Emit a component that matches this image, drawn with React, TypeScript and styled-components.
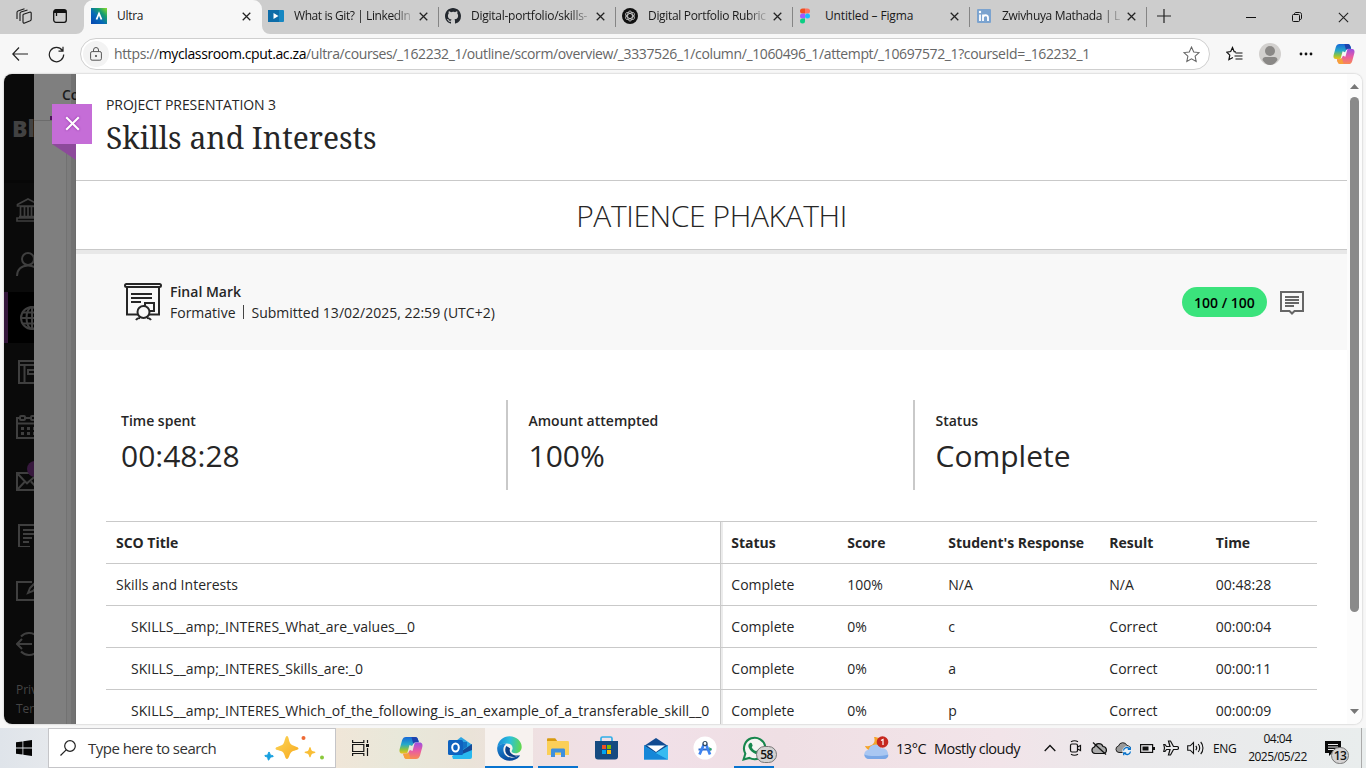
import React from 'react';
import styled, { createGlobalStyle } from 'styled-components';

const UI = '"Open Sans", "Noto Sans", sans-serif';

const Global = createGlobalStyle`
  * { box-sizing: border-box; }
  html, body { margin: 0; padding: 0; }
  body { width: 1366px; height: 768px; overflow: hidden; font-family: ${UI}; color: #262626; }
  svg { display: block; flex: none; }
`;

const Screen = styled.div`
  width: 1366px; height: 768px; overflow: hidden;
  display: flex; flex-direction: column; background: #f7f7f7;
`;

/* Browser chrome */
const TabBar = styled.div`
  height: 34px; flex: none; display: flex; background: #cdcdcd;
`;
const TabTools = styled.div`
  width: 84px; display: flex; align-items: center; padding: 0 17px 2px 16px; justify-content: space-between;
`;
const Tab = styled.div<{ $active?: boolean }>`
  width: ${p => (p.$active ? 178 : 177)}px; height: 34px; display: flex; align-items: center;
  padding: 0 11px 2px ${p => (p.$active ? 7 : 6)}px; position: relative;
  background: ${p => (p.$active ? '#f7f7f7' : 'transparent')};
  border-radius: 9px 9px 0 0;
`;
const TabFoot = styled.svg<{ $side: 'left' | 'right' }>`
  position: absolute; bottom: 0; ${p => p.$side}: -8px; width: 8px; height: 8px;
`;
const Favicon = styled.span`
  width: 16px; height: 16px; flex: none; display: flex; align-items: center; justify-content: center;
`;
const TabTitle = styled.span<{ $fade?: boolean; $ls?: number }>`
  margin-left: 10px; flex: 1; white-space: nowrap; font-size: 12px; line-height: 18px; color: #1a1a1a;
  letter-spacing: ${p => p.$ls ?? -0.15}px;
  ${p => p.$fade && 'mask-image: linear-gradient(90deg, #000 84%, rgba(0,0,0,.15) 100%);'}
`;
const TabClose = styled.span`
  width: 9px; margin-left: 7px; padding-top: 1px;
`;
const Divider = styled.span`
  position: absolute; right: 0; top: 7px; width: 1px; height: 20px; background: #858585;
`;
const WindowButtons = styled.div`
  margin-left: auto; display: flex; width: 138px;
`;
const WindowButton = styled.span`
  width: 46px; display: flex; align-items: center; justify-content: center;
`;
const NewTab = styled.span`
  width: 34px; display: flex; align-items: center; justify-content: center; padding-bottom: 3px;
`;
const Toolbar = styled.div`
  height: 40px; flex: none; display: flex; align-items: center; background: #f7f7f7;
`;
const ToolCell = styled.span<{ $w: number }>`
  width: ${p => p.$w}px; display: flex; justify-content: center; flex: none;
`;
const Address = styled.div`
  width: 1130px; height: 32px; border: 1px solid #cfcfcf; border-radius: 16px; background: #fff;
  display: flex; align-items: center; padding: 0 9px 0 2px; 
`;
const LockChip = styled.span`
  width: 26px; height: 26px; border-radius: 50%; background: #f3f3f3; display: flex; align-items: center; justify-content: center;
`;
const Url = styled.span`
  flex: 1; margin-left: 5px; font-size: 14px; line-height: 20px; letter-spacing: -0.375px; color: #666; white-space: nowrap;
  b { font-weight: 400; color: #000; }
`;

/* Page area */
const Page = styled.div`
  height: 650px; flex: none; margin: 0 4px; display: flex; overflow: hidden; background: #fff;
  border-radius: 8px; box-shadow: 0 0 2px rgba(0,0,0,.3);
`;
const SideNav = styled.nav`
  width: 30px; flex: none; overflow: hidden; background: #0a0a0a; display: flex; flex-direction: column;
`;
const Brand = styled.div`
  height: 109px; flex: none; padding: 40px 0 0 8px; font-size: 23px; font-weight: 800; line-height: 28px; color: #424242;
  border-bottom: 3px solid #070707; white-space: nowrap; 
`;
const NavItem = styled.div<{ $active?: boolean; $pad: number }>`
  height: 51px; flex: none; margin-bottom: 3.25px; display: flex; align-items: center; position: relative;
  padding: 2px 0 0 ${p => p.$pad}px; background: ${p => (p.$active ? '#000' : 'transparent')};
  box-shadow: ${p => (p.$active ? 'inset 4px 0 #34173b' : 'none')};
  svg { fill: none; stroke: #3f3f3f; stroke-width: 2; }
`;
const NavBadge = styled.span`
  position: absolute; left: 23px; top: 7px; width: 16px; height: 16px; border-radius: 50%; background: #37183e;
`;
const NavLinks = styled.div`
  padding: 9px 0 0 12px; font-size: 12px; line-height: 19px; color: #454545; white-space: nowrap;
`;
const Backdrop = styled.div`
  width: 42px; flex: none; position: relative; background: #7f7f7f;
  display: flex; flex-direction: column;
`;
const BackHead = styled.div`
  height: 47px; border-bottom: 1px solid #6c6c6c; padding: 11px 0 0 28px; font-size: 14px; line-height: 20px; font-weight: 600;
  color: #1c1c1c; overflow: hidden; white-space: nowrap; 
`;
const BackBody = styled.div`
  flex: 1; margin-right: 5px; border-right: 4px solid #7c7c7c; box-shadow: inset -1px 0 #727272; 
`;
const BackEdge = styled.span`
  position: absolute; right: 0; top: 0; width: 5px; height: 100%;
  background: linear-gradient(90deg, rgba(0,0,0,.1) 80%, rgba(0,0,0,.2));
`;
const PurpleMark = styled.span`
  position: absolute; left: 16px; top: 42px; width: 4px; height: 4px; background: #4c1659;
`;
const CloseRibbon = styled.button`
  position: absolute; left: 18px; top: 30px; z-index: 2; width: 40px; height: 40px; padding: 0 0 1px 0; border: 0; background: #c56dd7;
  display: flex; align-items: center; justify-content: center;
  svg { filter: drop-shadow(0 0 1px #8a2aa0); }
`;
const Fold = styled.svg`
  position: absolute; left: 18px; top: 70px; z-index: 2;
`;
const Panel = styled.main`
  width: 1271px; flex: none; overflow: hidden; background: #fff;
`;
const Heading = styled.header`
  height: 107px; padding: 20px 30px 0; border-bottom: 1px solid #c9c9c9;
`;
const Eyebrow = styled.div`
  font-size: 14px; line-height: 22px; letter-spacing: -0.08px;
`;
const Title = styled.h1`
  margin: 0; font-family: "Noto Serif", "DejaVu Serif", serif; font-weight: 400;
  font-size: 30px; line-height: 44px; color: #262626; white-space: nowrap;
`;
const StudentName = styled.div`
  height: 69px; border-bottom: 1px solid #c9c9c9; text-align: center; font-size: 30px; font-weight: 300; line-height: 69px;
  letter-spacing: -0.4px;
`;
const MarkBar = styled.section`
  height: 100px; border-top: 4px solid #e8e8e8; background: #f8f8f8; display: flex; align-items: flex-start; padding: 27px 42px 0 46px;
`;
const MarkIcon = styled.svg`
  margin-top: 1px;
`;
const MarkText = styled.div`
  margin-left: 6px; font-size: 14px; line-height: 21px; flex: 1;
  b { font-weight: 600; display: block; }
`;
const Bar = styled.span`
  display: inline-block; width: 1px; height: 14px; margin: 0 8px 0 7px; background: #444; vertical-align: -1px;
`;
const Score = styled.span`
  width: 85px; height: 30px; margin: 6px 13px 0 0; border-radius: 15px; background: #3be37c; color: #000; font-size: 14px; font-weight: 600;
  line-height: 31px; text-align: center;
`;
const Comment = styled.span`
  padding-top: 9px;
`;
const Stats = styled.section`
  display: flex; margin: 50px 0 31px 24px; height: 90px;
`;
const Stat = styled.div`
  width: 407px; border-right: 2px solid #c9c9c9; padding: 10px 0 0 20.5px;
  &:first-child { width: 408px; padding-left: 21px; }
  &:last-child { border-right: 0; }
`;
const StatLabel = styled.div`
  font-size: 14px; line-height: 22px; font-weight: 600; 
`;
const StatValue = styled.div`
  font-size: 30px; line-height: 44px; margin-top: 2px;
`;
const Table = styled.div`
  width: 1211px; margin-left: 30px;
`;
const Row = styled.div<{ $head?: boolean }>`
  display: grid; grid-template-columns: 617px 116px 101px 161px 106.500px 1fr; height: 42px; border-top: 1px solid #c9c9c9;
  font-size: 14px; line-height: 41px; font-weight: ${p => (p.$head ? 700 : 400)}; letter-spacing: ${p => (p.$head ? -0.02 : 0.01)}px;
`;
const Cell = styled.span`
  white-space: nowrap; padding-left: 8.300px;
`;
const TitleCell = styled(Cell)<{ $indent?: boolean }>`
  padding-left: ${p => (p.$indent ? 25 : 10)}px;
  border-right: 2px solid #ececec; box-shadow: inset -1px 0 #c9c9c9;
`;
const ScrollTrack = styled.div`
  width: 15px; flex: none; display: flex; flex-direction: column; align-items: center; background: #fcfcfc; padding-top: 10px;
`;
const Thumb = styled.span`
  width: 9px; height: 515px; margin: 8px 0 97px; border-radius: 5px; background: #8a8a8a;
`;

/* Taskbar */
const Taskbar = styled.footer`
  height: 40px; margin-top: 4px; flex: none; display: flex; align-items: center; color: #111;
  background: linear-gradient(90deg, #dfe4ea 0, #e5e8ec 48px, #f0e6d8 335px, #e8e8da 400px, #eae3d8 470px, #efe0e2 540px, #f1e0e8 650px, #efdfe4 780px, #f2e4e9 1000px, #eae9eb 1130px, #e9eded 1366px);
`;
const TaskCell = styled.span<{ $w: number; $on?: boolean; $pr?: number }>`
  width: ${p => p.$w}px; height: 40px; flex: none; display: flex; align-items: center; justify-content: center; position: relative;
  padding-right: ${p => p.$pr ?? 0}px; background: ${p => (p.$on ? '#f7f2ef' : 'transparent')};
`;
const Running = styled.span<{ $w: number }>`
  position: absolute; bottom: 0; height: 2px; width: ${p => p.$w}px; background: #0873cf;
`;
const SearchBox = styled.div`
  width: 288px; height: 40px; border: 1px solid #c5c5c8; background: #fff; display: flex; align-items: center; padding: 0 9px 0 11px;
  font-size: 15px; color: #333; letter-spacing: -0.52px;
`;
const SearchText = styled.span`
  flex: 1; margin-left: 12px;
`;
const CountBadge = styled.span<{ $x: number; $y: number; $w: number }>`
  position: absolute; left: ${p => p.$x}px; top: ${p => p.$y}px; width: ${p => p.$w}px; height: 17px; border: 1px solid #777; border-radius: 9px;
  background: #d4d2d2; font-size: 12px; font-weight: 600; line-height: 15px; text-align: center; letter-spacing: -0.6px; color: #111;
`;
const Weather = styled.span`
  margin-left: 85px; display: flex; align-items: center; font-size: 14.5px; letter-spacing: -0.53px; white-space: nowrap;
`;
const Temp = styled.span`
  width: 38px; margin-left: 7px; letter-spacing: -0.45px;
`;
const Tray = styled.span`
  margin-left: auto; display: flex; align-items: center;
`;
const Lang = styled.span`
  width: 28px; padding-left: 6px; font-size: 12px; letter-spacing: -0.4px;
`;
const Clock = styled.span`
  width: 84px; padding-left: 1px; text-align: center; font-size: 12px; line-height: 18px; letter-spacing: -0.5px; white-space: nowrap;
`;
const ShowDesktop = styled.span`
  width: 5px; height: 40px; border-left: 1px solid #aaa;
`;

const Cross = ({ size = 10, color = '#222', w = 1.4 }: { size?: number; color?: string; w?: number }) => (
  <svg width={size} height={size} viewBox="0 0 10 10" fill="none" stroke={color} strokeWidth={w}><path d="M.8.8l8.400 8.400M9.200.8L.8 9.200" /></svg>
);

const Copilot = ({ size }: { size: number }) => (
  <svg width={size} height={size} viewBox="0 0 24 24">
    <defs>
      <linearGradient id="cpa" x1="0" y1="0" x2="0" y2="1"><stop offset="0" stopColor="#1668d8" /><stop offset=".45" stopColor="#26a9c9" /><stop offset=".75" stopColor="#8fc33f" /><stop offset="1" stopColor="#f2c21b" /></linearGradient>
      <linearGradient id="cpb" x1="0" y1="0" x2="0" y2="1"><stop offset="0" stopColor="#9a50e0" /><stop offset=".5" stopColor="#e85aa5" /><stop offset="1" stopColor="#f98b52" /></linearGradient>
    </defs>
    <path d="M7 1h9c2 0 2.600 1.300 3.200 3l.6 2.200H17c-1.800 0-2.600.8-3.100 2.500L13 10l-2.500-1-2.300 8.500H4C1 18 0 15.500.7 13L3 4.500C3.800 2 5 1 7 1z" fill="url(#cpa)" />
    <path d="M12.500 1H16c2 0 2.600 1.300 3.200 3l.6 2.200H17c-1.400 0-2.300.5-2.800 1.600z" fill="#1d43ae" />
    <path d="M17 23H8c-2 0-2.700-1.300-3.200-3l-.6-2.200H7c1.800 0 2.600-.8 3.100-2.500L11 14l2.500 1 2.300-8.500H20c3-.5 4 2 3.300 4.500L21 19.500c-.8 2.500-2 3.500-4 3.500z" fill="url(#cpb)" />
    <path d="M11.500 23H8c-2 0-2.600-1.300-3.200-3l-.6-2.200H7c1.400 0 2.300-.5 2.800-1.600z" fill="#f6a13a" />
  </svg>
);

const star = 'M8 1l2.100 4.600 5 .6-3.700 3.400 1 4.900L8 12.100l-4.400 2.400 1-4.900L.9 6.200l5-.6z';

const tabs: { title: string; ls?: number; icon: React.ReactNode }[] = [
  { title: 'What is Git? | LinkedIn', ls: -0.42, icon: <svg width="16" height="12" viewBox="0 0 16 12"><rect width="16" height="12" rx="1" fill="#1687c2" /><rect width="11" height="12" fill="#0d6ca8" /><path d="M5.500 3l5 3-5 3z" fill="#fff" /></svg> },
  { title: 'Digital-portfolio/skills-', ls: -0.25, icon: <svg width="16" height="16" viewBox="0 0 16 16"><path fill="#24292f" d="M8 0C3.580 0 0 3.580 0 8c0 3.540 2.290 6.530 5.470 7.590.4.070.55-.17.55-.38 0-.19-.01-.82-.01-1.490-2.010.37-2.530-.49-2.690-.94-.09-.23-.48-.94-.82-1.130-.28-.15-.68-.52-.01-.53.63-.01 1.080.58 1.230.82.72 1.210 1.870.87 2.330.66.070-.52.28-.87.51-1.070-1.780-.2-3.640-.89-3.640-3.950 0-.87.31-1.590.82-2.150-.08-.2-.36-1.020.08-2.120 0 0 .67-.21 2.200.82A7.600 7.600 0 018 3.860c.68 0 1.360.09 2 .27 1.530-1.040 2.200-.82 2.200-.82.44 1.100.16 1.920.08 2.120.51.56.82 1.270.82 2.150 0 3.070-1.870 3.750-3.650 3.950.29.25.54.73.54 1.480 0 1.070-.01 1.930-.01 2.200 0 .21.15.46.55.38A8.010 8.010 0 0016 8c0-4.420-3.580-8-8-8z" /></svg> },
  { title: 'Digital Portfolio Rubric', ls: -0.32, icon: <svg width="16" height="16" viewBox="0 0 16 16"><circle cx="8" cy="8" r="8" fill="#111" /><g fill="none" stroke="#d8d8d8" strokeWidth=".8"><ellipse cx="8" cy="8" rx="2.400" ry="5" /><ellipse cx="8" cy="8" rx="2.400" ry="5" transform="rotate(60 8 8)" /><ellipse cx="8" cy="8" rx="2.400" ry="5" transform="rotate(120 8 8)" /></g></svg> },
  { title: 'Untitled – Figma', icon: <svg width="16" height="16" viewBox="0 0 16 16"><path d="M6 .5H3.500a2.500 2.500 0 000 5H6z" fill="#f24e1e" /><path d="M6 .5h2.500a2.500 2.500 0 010 5H6z" fill="#ff7262" /><path d="M6 5.500H3.500a2.500 2.500 0 000 5H6z" fill="#a259ff" /><circle cx="8.500" cy="8" r="2.500" fill="#1abcfe" /><path d="M6 10.500H3.500a2.500 2.500 0 102.500 2.500z" fill="#0acf83" /></svg> },
  { title: 'Zwivhuya Mathada | L', ls: -0.33, icon: <svg width="14" height="14" viewBox="0 0 14 14"><rect width="14" height="14" rx="1" fill="#7ba3cf" /><path d="M3 5.500V12M6 12V5.500M6 8.500c0-2.500 5-3.500 5 0V12" stroke="#fff" strokeWidth="1.800" fill="none" /><circle cx="3" cy="3" r="1.200" fill="#fff" /></svg> },
];

const nav: { pad: number; active?: boolean; badge?: boolean; icon: React.ReactNode }[] = [
  { pad: 12, icon: <path d="M1.500 8V6.500L12 1l10.500 5.500V8zM4 8.500h16M4.500 9v9M8.500 9v9M12 9v9M15.500 9v9M19.500 9v9M3 18.500h18M1 20v3h22v-3z" strokeWidth="1.700" /> },
  { pad: 12, icon: <g><circle cx="12" cy="7" r="6" /><path d="M1 24c0-6.500 4.500-10.500 11-10.500S23 17.500 23 24" /></g> },
  { pad: 16, active: true, icon: <g><circle cx="12" cy="12" r="11" /><ellipse cx="12" cy="12" rx="5.500" ry="11" /><path d="M12 1v22M1 12h22M3 6.500h18M3 17.500h18" /></g> },
  { pad: 14, icon: <path d="M1 1h24v22H1zM1 5h24M6.500 5v18M10 10h10v4H10z" /> },
  { pad: 12, icon: <g><path d="M4 3H1v20h22V3h-3M9 3h6M1 8.500h22" /><rect x="4" y="1" width="5" height="4" rx="1" /><rect x="15" y="1" width="5" height="4" rx="1" /><path d="M5 13.500h3M11 13.500h3M17 13.500h3M5 18.500h3M11 18.500h3M17 18.500h3" strokeWidth="3" /></g> },
  { pad: 12, badge: true, icon: <path d="M1 4h22v17H1zM1 4l8 8.500L1 21M9 12.500l2 1.800 2-1.800 10-8.500M15 12.500l8 8.500" /> },
  { pad: 14, icon: <path d="M12 24H1V2h20v18M5 7h12M5 11h12M5 15h9M5 19h6M16 24h4" /> },
  { pad: 12, icon: <path d="M16 5H1v18h21v-8M12 16l2-5 9-9 3 3-9 9z" /> },
  { pad: 12, icon: <path d="M5 4.500a11 11 0 110 15M1 12h15M6 7l-5 5 5 5" /> },
];

const rows: string[][] = [
  ['SKILLS__amp;_INTERES_What_are_values__0', 'Complete', '0%', 'c', 'Correct', '00:00:04'],
  ['SKILLS__amp;_INTERES_Skills_are:_0', 'Complete', '0%', 'a', 'Correct', '00:00:11'],
  ['SKILLS__amp;_INTERES_Which_of_the_following_is_an_example_of_a_transferable_skill__0', 'Complete', '0%', 'p', 'Correct', '00:00:09'],
];

function TableRow({ cells, head, indent }: { cells: string[]; head?: boolean; indent?: boolean }) {
  const [title, ...rest] = cells;
  return (
    <Row $head={head}>
      <TitleCell $indent={indent}>{title}</TitleCell>
      {rest.map((c, i) => <Cell key={i}>{c}</Cell>)}
    </Row>
  );
}

function BrowserChrome() {
  return (
    <>
      <TabBar>
        <TabTools>
          <svg width="16" height="16" viewBox="0 0 16 16" fill="none" stroke="#1b1b1b" strokeWidth="1.100"><path d="M7.500 6.200l6-2c1-.3 1.700.1 1.700 1v6c0 .7-.4 1.200-1 1.500l-5.500 2.300c-1 .4-1.700-.1-1.700-1V7c0-.4.2-.7.5-.8zM4 13V5.500c0-.8.4-1.300 1-1.500l6.500-2M1 11V4.500C1 3.700 1.400 3.200 2 3L8.500.7" /></svg>
          <svg width="14" height="14" viewBox="0 0 14 14" fill="none" stroke="#111"><rect x=".7" y=".7" width="12.600" height="12.600" rx="2.200" strokeWidth="1.300" /><path d="M1 2.500h12" strokeWidth="3" /><path d="M3.500 4v3" strokeWidth="1.300" /></svg>
        </TabTools>
        <Tab $active>
          <TabFoot $side="left" viewBox="0 0 8 8"><path d="M8 0v8H0a8 8 0 008-8z" fill="#f7f7f7" /></TabFoot>
          <TabFoot $side="right" viewBox="0 0 8 8"><path d="M0 0v8h8a8 8 0 01-8-8z" fill="#f7f7f7" /></TabFoot>
          <Favicon>
            <svg width="16" height="16" viewBox="0 0 16 16"><defs><linearGradient id="ul" x1="1" y1="0" x2="0" y2="1"><stop offset="0" stopColor="#8fdc2c" /><stop offset=".3" stopColor="#18a06c" /><stop offset=".6" stopColor="#0667b8" /><stop offset="1" stopColor="#0746b0" /></linearGradient></defs><rect width="16" height="16" fill="url(#ul)" /><path d="M5.500 11.500L8 5.500l2.500 6" stroke="#fff" strokeWidth="1.800" fill="none" /></svg>
          </Favicon>
          <TabTitle $ls={-0.3}>Ultra</TabTitle>
          <TabClose><Cross size={9} /></TabClose>
        </Tab>
        {tabs.map(t => (
          <Tab key={t.title}>
            <Favicon>{t.icon}</Favicon>
            <TabTitle $ls={t.ls} $fade={t.ls !== undefined}>{t.title}</TabTitle>
            <TabClose><Cross size={9} /></TabClose>
            <Divider />
          </Tab>
        ))}
        <NewTab><svg width="14" height="14" viewBox="0 0 14 14" stroke="#222" strokeWidth="1.200"><path d="M7 0v14M0 7h14" /></svg></NewTab>
        <WindowButtons>
          <WindowButton><svg width="10" height="10" stroke="#111"><path d="M0 5.500h10" /></svg></WindowButton>
          <WindowButton><svg width="10" height="10" viewBox="0 0 10 10" fill="none" stroke="#111"><rect x=".5" y="2.500" width="7" height="7" rx="1" /><path d="M2.500 2.200C2.500 1 3 .5 4 .5h3.500c1.300 0 2 .7 2 2V6c0 1-.5 1.500-1.500 1.500" /></svg></WindowButton>
          <WindowButton><Cross size={11} w={1} /></WindowButton>
        </WindowButtons>
      </TabBar>
      <Toolbar>
        <ToolCell $w={40}><svg width="16" height="14" viewBox="0 0 16 14" fill="none" stroke="#222" strokeWidth="1.200"><path d="M7 .5L.8 7 7 13.500M.8 7H16" /></svg></ToolCell>
        <ToolCell $w={32}><svg width="17" height="17" viewBox="0 0 17 17" fill="none" stroke="#222" strokeWidth="1.200"><path d="M15.700 8.500A7.200 7.200 0 1114.300 4.300M15 .8V5.200h-4.500" /></svg></ToolCell>
        <ToolCell $w={8} />
        <Address>
          <LockChip><svg width="12" height="14" viewBox="0 0 12 14" fill="none" stroke="#555"><rect x=".6" y="4.600" width="10.800" height="8.600" rx="1.500" /><path d="M3.500 4.500V3a2.500 2.500 0 015 0v1.500" /><circle cx="6" cy="9" r=".7" fill="#555" /></svg></LockChip>
          <Url>https://<b>myclassroom.cput.ac.za</b>/ultra/courses/_162232_1/outline/scorm/overview/_3337526_1/column/_1060496_1/attempt/_10697572_1?courseId=_162232_1</Url>
          <svg width="17" height="17" viewBox="0 0 16 16" fill="none" stroke="#666"><path d={star} /></svg>
        </Address>
        <ToolCell $w={48}><svg width="17" height="17" viewBox="0 0 17 17" fill="none" stroke="#111" strokeWidth="1.200"><path d="M10 6L8.200 5.700 6.500 1.500 4.700 5.500.8 6.200l3 3-.9 4.500 4-2.200M9.500 7h7M8.500 10h8M9.500 13h7" /></svg></ToolCell>
        <ToolCell $w={24}><svg width="22" height="22" viewBox="0 0 22 22"><circle cx="11" cy="11" r="11" fill="#d2d0ce" /><circle cx="11" cy="8" r="5" fill="#8a8886" /><path d="M3.500 17c0-2 1.500-3 3-3h9c1.500 0 3 1 3 3-2 3-4.500 5-7.500 5s-5.500-2-7.500-5z" fill="#8a8886" /></svg></ToolCell>
        <ToolCell $w={48}><svg width="14" height="4" fill="#111"><circle cx="2" cy="2" r="1.400" /><circle cx="7" cy="2" r="1.400" /><circle cx="12" cy="2" r="1.400" /></svg></ToolCell>
        <ToolCell $w={28}><Copilot size={22} /></ToolCell>
      </Toolbar>
    </>
  );
}

function TaskbarView() {
  return (
    <Taskbar>
      <TaskCell $w={48}><svg width="16" height="16" viewBox="0 0 16 16" fill="#050505"><path d="M0 2.300L6.500 1.400v6.200H0zM7.300 1.300L16 0v7.600H7.300zM0 8.400h6.500v6.200L0 13.700zM7.300 8.400H16V16l-8.700-1.300z" /></svg></TaskCell>
      <SearchBox>
        <svg width="16" height="16" viewBox="0 0 16 16" fill="none" stroke="#222" strokeWidth="1.200"><circle cx="10" cy="6" r="5.300" /><path d="M6.200 9.800L.5 15.500" /></svg>
        <SearchText>Type here to search</SearchText>
        <svg width="62" height="28" viewBox="0 0 62 28">
          <defs><linearGradient id="sp" x1="0" y1="0" x2="1" y2="1"><stop offset="0" stopColor="#fbd65a" /><stop offset="1" stopColor="#f8a91c" /></linearGradient></defs>
          <path d="M23 2c2 0 1.600 6 4 8.200S34.500 12.500 34.500 14.500 29 16 27 18.500 25 25 23 25s-2-4.500-4-6.700-7.500-1.800-7.500-3.800S17 12.500 19 10.200 21 2 23 2z" fill="url(#sp)" />
          <path d="M46 13c1 0 .8 2.800 1.900 3.700s3.600.5 3.600 1.500-2.600.8-3.600 1.800-1 3.500-1.900 3.500-.8-2.500-1.900-3.500-3.600-.8-3.600-1.800 2.600-.6 3.600-1.500.9-3.700 1.900-3.700z" fill="#f9be35" />
          <path d="M5 18c.8 0 .6 2.200 1.400 2.900s3 .5 3 1.300-2.300.4-3 1.100S5.400 26 4.500 26s-.3-2-1-2.700-2.800-.7-2.800-1.500 2.300-.2 3-.9S4.200 18 5 18z" fill="#16a0e0" stroke="#16a0e0" />
          <circle cx="39.500" cy="4" r="2" fill="#ee6a35" /><circle cx="58" cy="23.500" r="2" fill="#8ac83c" />
        </svg>
      </SearchBox>
      <TaskCell $w={50} $pr={2}><svg width="17" height="16" viewBox="0 0 17 16" fill="none" stroke="#151515" strokeWidth="1.200"><path d="M.6 0v2.500h11.200V0M.6 16v-2.500h11.200V16M.6 4.500h11.200v7H.6zM15.500 0v3M15.500 8v8" /><path d="M14 4h3v3h-3z" fill="#151515" stroke="none" /></svg></TaskCell>
      <TaskCell $w={49}><Copilot size={24} /></TaskCell>
      <TaskCell $w={50}>
        <svg width="24" height="24" viewBox="0 0 24 24"><path d="M3 9L13 1l10 7v3H3z" fill="#2ca5e3" /><path d="M7 6h12v9H7z" fill="#1472c5" /><path d="M24 8v13a2 2 0 01-2 2H5l-1-3z" fill="#28b8ef" /><path d="M24 8v6L12 19v-3z" fill="#164b99" /><rect y="4" width="15" height="15" rx="1.500" fill="#0e62bf" /><ellipse cx="7.500" cy="11.500" rx="3.300" ry="4" fill="none" stroke="#fff" strokeWidth="2" /></svg>
      </TaskCell>
      <TaskCell $w={48} $on>
        <svg width="25" height="25" viewBox="0 0 24 24"><defs><linearGradient id="e1" x1="0" y1=".3" x2="1" y2=".4"><stop offset="0" stopColor="#1a8ad8" /><stop offset=".5" stopColor="#2bc0dc" /><stop offset="1" stopColor="#62d84e" /></linearGradient><linearGradient id="e2" x1="0" y1="0" x2=".4" y2="1"><stop offset="0" stopColor="#1d8fdd" /><stop offset="1" stopColor="#0b4a9c" /></linearGradient></defs><path d="M.3 10.500C1.200 4.500 6 .3 12 .3c7 0 11.700 5 11.700 10.200 0 3.500-2.600 6-6 6-2.700 0-3.700-1-3.700-1.800 0-1 1-1.300 1-3 0-2.500-2.200-4.500-5.500-4.500S2.500 8 .3 10.500z" fill="url(#e1)" /><path d="M.3 10.500C2 8 5.500 7.200 9 7.200c-2.500 2-3.500 5-2.500 8.300 1 3.500 4.500 5.300 7.700 5.300 3.500 0 6-1.800 7-2.300.6-.2.900.3.600.8-2.300 3.200-5.800 4.500-9.800 4.500C4.500 23.800-.8 17.500.3 10.500z" fill="url(#e2)" /><path d="M9 9.500c-2 3-1.500 8 3 10 3.500 1.500 7 .5 9.200-1-2 .5-6.200.2-8.200-2.500-1-1.500-1-3-.3-4z" fill="#0c3f86" /></svg>
        <Running $w={48} />
      </TaskCell>
      <TaskCell $w={50}>
        <svg width="22" height="20" viewBox="0 0 22 20"><path d="M0 1.500C0 .7.5.2 1.200.2h7l2 2.800H0z" fill="#d89a10" /><path d="M0 3h20.500c.8 0 1.500.5 1.500 1.300V17H0z" fill="#fbcf58" /><path d="M4 19v-7c0-1 .6-1.500 1.500-1.500h11c1 0 1.500.5 1.500 1.500v7h-4v-4.500H8V19z" fill="#3f8fdd" /></svg>
        <Running $w={40} />
      </TaskCell>
      <TaskCell $w={48} $pr={1}>
        <svg width="23" height="24" viewBox="0 0 23 24"><path d="M6 6V2.500C6 1.500 6.500 1 7.500 1h8c1 0 1.500.5 1.500 1.500V6" fill="none" stroke="#31aee8" strokeWidth="1.700" /><path d="M0 5h23v15.500a3 3 0 01-3 3H3a3 3 0 01-3-3z" fill="#164a80" /><path d="M7 9h4v4H7z" fill="#f25022" /><path d="M12 9h4v4h-4z" fill="#7fba00" /><path d="M7 14h4v4H7z" fill="#00a4ef" /><path d="M12 14h4v4h-4z" fill="#ffb900" /></svg>
      </TaskCell>
      <TaskCell $w={50}>
        <svg width="24" height="23" viewBox="0 0 24 23"><path d="M0 9L12 1l12 8z" fill="#124b91" /><path d="M0 8.500h24V22.500H0z" fill="#28a8ea" /><path d="M0 8.500h24L12 16z" fill="#124b91" /><path d="M3 8.500h18L12 15z" fill="#fff" /><path d="M0 9l12 7 12 6.500H0z" fill="#1687d8" /><path d="M24 9l-12 7 12 6.500z" fill="#37bbf1" /></svg>
      </TaskCell>
      <TaskCell $w={48}>
        <svg width="24" height="24" viewBox="0 0 24 24"><circle cx="12" cy="12" r="11.500" fill="#fff" /><path d="M5.500 13.500h13" stroke="#2c66c9" strokeWidth="2" /><path d="M6.500 18.500L11.500 7M17 18.500L12.500 7" stroke="#3e83f0" strokeWidth="2.700" /><circle cx="12" cy="7.500" r="2" fill="#fff" stroke="#30475e" strokeWidth="1.200" /><path d="M16 11l3 2-2 2z" fill="#2aa860" /></svg>
      </TaskCell>
      <TaskCell $w={50}>
        <svg width="25" height="25" viewBox="0 0 24 24"><path d="M1.500 22.500L3.200 17A10.300 10.300 0 1112 22.300c-1.800 0-3.500-.5-5-1.300z" fill="#f5f5f2" stroke="#17874d" strokeWidth="2" /><path d="M8 6.500c.8-.3 1.200 0 1.500.8l.7 1.700c.2.6-1 1.300-.8 1.700 1 2 2.200 3 4 3.800.6.200 1.200-1.300 1.800-1.100l2 1c.6.300.4 1.500 0 2.100-.8 1-2.200 1.300-3.500.9-3.500-1-6-3.500-7.300-6.400-.7-1.600-.2-3.600 1.600-4.500z" fill="#17874d" /></svg>
        <CountBadge $x={27} $y={18} $w={21}>58</CountBadge>
        <Running $w={40} />
      </TaskCell>
      <Weather>
        <svg width="25" height="24" viewBox="0 0 25 24"><path d="M10 1c2 5-1 10-9 9 1 3 5 5 9 5 5 0 8-4 8-8s-4-6-8-6z" fill="#f5a52a" /><path d="M5 23a4.600 4.600 0 01-.3-9.200A6.500 6.500 0 0117 12.500 5.200 5.200 0 0120 23z" fill="#a9c7f2" /><path d="M5 23a4.600 4.600 0 01-4.600-4.600c4 2 17 2 24 0A4.700 4.700 0 0120 23z" fill="#7aa7e6" /><circle cx="18.500" cy="6" r="5.800" fill="#c6281f" /><path d="M17 4.500l2-1v5.500" stroke="#fff" fill="none" strokeWidth="1.200" /></svg>
        <Temp>13°C</Temp>Mostly cloudy
      </Weather>
      <Tray>
        <TaskCell $w={26}><svg width="12" height="8" fill="none" stroke="#111" strokeWidth="1.300"><path d="M.7 7L6 1.500 11.300 7" /></svg></TaskCell>
        <TaskCell $w={24}><svg width="13" height="16" viewBox="0 0 13 16" fill="none" stroke="#111" strokeWidth="1.200"><rect x="1.500" y="4" width="7" height="8" rx="1.500" /><path d="M8.500 7l3-1.500v5l-3-1.500M2 1.800C4 .6 7 .6 9 1.800M2 14.200c2 1.200 5 1.200 7 0" /></svg></TaskCell>
        <TaskCell $w={24}><svg width="17" height="13" viewBox="0 0 17 13" fill="#aaa" stroke="#111" strokeWidth="1.200"><path d="M4 11.500a3.300 3.300 0 01-.5-6.500A4.500 4.500 0 0112 4.500a3.600 3.600 0 011 7z" /><path d="M2 .5L15 12.500" /></svg></TaskCell>
        <TaskCell $w={24}><svg width="17" height="15" viewBox="0 0 17 15"><path d="M4 11.500a3.300 3.300 0 01-.5-6.500A4.500 4.500 0 0112 4.500a3.600 3.600 0 011 7z" fill="#999" stroke="#222" /><circle cx="12" cy="10" r="4.700" fill="#e9f2f8" /><path d="M8.500 9.500a3.400 3.400 0 016-1.700M15.300 5.800v2.500h-2.500M15.500 10.500a3.400 3.400 0 01-6 1.700M8.700 14.300v-2.500h2.500" fill="none" stroke="#0870c8" strokeWidth="1.300" /></svg></TaskCell>
        <TaskCell $w={24}><svg width="15" height="9" viewBox="0 0 15 9"><rect x=".6" y=".6" width="12" height="7.800" fill="none" stroke="#111" strokeWidth="1.200" /><path d="M2.500 2.500h6v4h-6zM13 3h2v3h-2z" fill="#111" /></svg></TaskCell>
        <TaskCell $w={24}><svg width="16" height="16" viewBox="0 0 16 16" fill="none" stroke="#111" strokeWidth="1.200"><path d="M5.500 1h2l3 5.500H14c2 0 2 3 0 3h-3.500l-3 5.500h-2L7 9.500H3.500L2 11.500H.8L1.500 8 .8 4.500H2l1.500 2H7z" /></svg></TaskCell>
        <TaskCell $w={24}><svg width="17" height="14" viewBox="0 0 17 14" fill="none" stroke="#111" strokeWidth="1.100"><path d="M.7 4.800h2.500L6.500 1.500v11L3.200 9.200H.7zM8.800 4.800c1 1.200 1 3.200 0 4.400M11.200 3c2 2.200 2 5.800 0 8M13.700 1c3 3.200 3 8.800 0 12" /></svg></TaskCell>
        <Lang>ENG</Lang>
        <Clock>04:04<br />2025/05/22</Clock>
        <TaskCell $w={42} $pr={14}>
          <svg width="16" height="15" viewBox="0 0 16 15"><path d="M0 0h16v12H7l-3 3v-3H0z" fill="#0a0a0a" /><path d="M3 3.500h10M3 6h10M3 8.500h6" stroke="#eee" /></svg>
          <CountBadge $x={12} $y={19} $w={18}>13</CountBadge>
        </TaskCell>
        <ShowDesktop />
      </Tray>
    </Taskbar>
  );
}

export default function App() {
  return (
    <Screen>
      <Global />
      <BrowserChrome />
      <Page>
        <SideNav>
          <Brand>Bl</Brand>
          {nav.map((n, i) => (
            <NavItem key={i} $active={n.active} $pad={n.pad}>
              <svg width="26" height="24" viewBox="0 0 26 24">{n.icon}</svg>
              {n.badge && <NavBadge />}
            </NavItem>
          ))}
          <NavLinks>Priv<br />Ter</NavLinks>
        </SideNav>
        <Backdrop>
          <BackHead>Co</BackHead>
          <BackBody />
          <BackEdge />
          <PurpleMark />
          <CloseRibbon aria-label="Close"><Cross size={15} color="#fff" w={1.4} /></CloseRibbon>
          <Fold width="24" height="16"><path d="M0 0h24v16z" fill="#8d4a9b" /></Fold>
        </Backdrop>
        <Panel>
          <Heading>
            <Eyebrow>PROJECT PRESENTATION 3</Eyebrow>
            <Title>Skills and Interests</Title>
          </Heading>
          <StudentName>PATIENCE PHAKATHI</StudentName>
          <MarkBar>
            <MarkIcon width="42" height="40" viewBox="0 0 42 40" fill="none" stroke="#262626" strokeWidth="2"><rect x="3" y="2" width="36" height="3" rx="1.500" /><path d="M5 5v27.500h11M37 5v27.500H27M9 12h21M9 16h21M9 20h10M23 24v-3h9v8h-5" /><circle cx="21.500" cy="30" r="6" /><path d="M14 38c1-2 3-2 4-2M29 38c-1-2-3-2-4-2" /></MarkIcon>
            <MarkText><b>Final Mark</b>Formative<Bar />Submitted 13/02/2025, 22:59 (UTC+2)</MarkText>
            <Score>100 / 100</Score>
            <Comment><svg width="25" height="25" viewBox="0 0 25 25" fill="none" stroke="#666" strokeWidth="2"><path d="M1 2h22v19h-8.500l-2.500 2.500L9.500 21H1zM5 7h14M5 10h14M5 13h14M5 16h9" /></svg></Comment>
          </MarkBar>
          <Stats>
            <Stat><StatLabel>Time spent</StatLabel><StatValue>00:48:28</StatValue></Stat>
            <Stat><StatLabel>Amount attempted</StatLabel><StatValue>100%</StatValue></Stat>
            <Stat><StatLabel>Status</StatLabel><StatValue>Complete</StatValue></Stat>
          </Stats>
          <Table>
            <TableRow head cells={['SCO Title', 'Status', 'Score', "Student's Response", 'Result', 'Time']} />
            <TableRow cells={['Skills and Interests', 'Complete', '100%', 'N/A', 'N/A', '00:48:28']} />
            {rows.map(r => <TableRow key={r[0]} indent cells={r} />)}
          </Table>
        </Panel>
        <ScrollTrack>
          <svg width="9" height="5" fill="#777"><path d="M0 5l4.500-5L9 5z" /></svg>
          <Thumb />
          <svg width="9" height="5" fill="#777"><path d="M0 0l4.500 5L9 0z" /></svg>
        </ScrollTrack>
      </Page>
      <TaskbarView />
    </Screen>
  );
}
